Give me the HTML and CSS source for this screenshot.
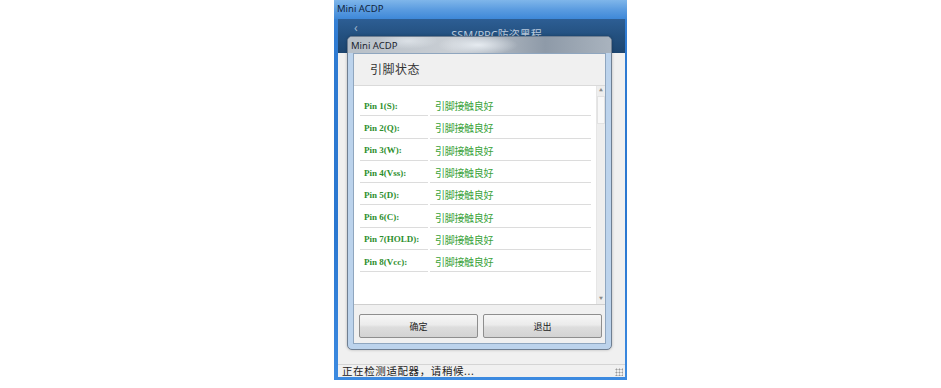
FILE: index.html
```html
<!DOCTYPE html>
<html lang="zh">
<head>
<meta charset="utf-8">
<title>Mini ACDP</title>
<link rel="stylesheet" href="styles.css">
</head>
<body>
<div class="stage">
  <div class="win">
    <div class="win-title">Mini ACDP</div>
    <div class="client">
      <div class="app-header">
        <span class="back">&lsaquo;</span>
        <span class="app-title">SSM/PPC防盗黑程</span>
      </div>
      <div class="app-body"></div>
      <div class="statusbar">
        <span>正在检测适配器，请稍候...</span>
        <span class="grip"></span>
      </div>

      <div class="dialog">
        <div class="dlg-title">Mini ACDP</div>
        <div class="dlg-client">
          <div class="dlg-head">引脚状态</div>
          <div class="listbox">
            <div class="rows">
              <div class="row"><span class="pin">Pin 1(S):</span><span class="state">引脚接触良好</span></div>
              <div class="row"><span class="pin">Pin 2(Q):</span><span class="state">引脚接触良好</span></div>
              <div class="row"><span class="pin">Pin 3(W):</span><span class="state">引脚接触良好</span></div>
              <div class="row"><span class="pin">Pin 4(Vss):</span><span class="state">引脚接触良好</span></div>
              <div class="row"><span class="pin">Pin 5(D):</span><span class="state">引脚接触良好</span></div>
              <div class="row"><span class="pin">Pin 6(C):</span><span class="state">引脚接触良好</span></div>
              <div class="row"><span class="pin">Pin 7(HOLD):</span><span class="state">引脚接触良好</span></div>
              <div class="row"><span class="pin">Pin 8(Vcc):</span><span class="state">引脚接触良好</span></div>
            </div>
            <div class="scrollbar">
              <span class="arrow">&#9650;</span>
              <span class="thumb"></span>
              <span class="track"></span>
              <span class="arrow">&#9660;</span>
            </div>
          </div>
          <div class="dlg-foot">
            <button class="btn">确定</button>
            <button class="btn">退出</button>
          </div>
        </div>
      </div>
    </div>
  </div>
</div>
</body>
</html>
```

FILE: styles.css
```css
* { box-sizing: border-box; }
html, body { margin: 0; padding: 0; background: #ffffff; }
body { width: 941px; height: 388px; overflow: hidden; font-family: "Noto Sans", "Noto Sans CJK SC", sans-serif; }

.stage { padding-left: 334px; }

.win {
  width: 293px;
  height: 380px;
  background: linear-gradient(180deg, #3d87d8 0%, #2f7bd2 10%, #2a77d0 60%, #3c8ae0 100%);
  padding: 0 2px 3px 4px;
  display: flex;
  flex-direction: column;
}
.win-title {
  height: 19px;
  line-height: 17px;
  font-size: 9.5px;
  color: #10243c;
  background: linear-gradient(180deg, #7fb6ea 0%, #5b9ce0 50%, #3e88d8 100%);
  margin: 0 -2px 0 -4px;
  padding-left: 3px;
}
.client {
  position: relative;
  flex: 1;
  display: flex;
  flex-direction: column;
  background: #f0f0f0;
}
.app-header {
  height: 34px;
  background: linear-gradient(180deg, #2d5e94 0%, #23507f 50%, #1d456f 100%);
  display: flex;
  align-items: flex-start;
  justify-content: center;
  position: relative;
  overflow: hidden;
}
.back { position: absolute; left: 16px; top: 3px; font-size: 12px; line-height: 12px; color: #9fb4cc; }
.app-title { font-size: 11px; line-height: 14px; margin-left: 30px; margin-top: 9px; color: #b9c9dc; }
.app-body { flex: 1; background: #f0f0f0; }
.statusbar {
  height: 13px;
  border-top: 1px solid #d4d4d4;
  background: #f0f0f0;
  font-size: 10.5px;
  line-height: 12px;
  color: #222;
  padding-left: 4px;
  display: flex;
  justify-content: space-between;
  letter-spacing: 0.6px;
}
.grip {
  width: 8px; height: 8px; margin: 3px 2px 0 0;
  background: radial-gradient(circle, #9a9a9a 0.8px, transparent 1.2px) 0 0 / 3px 3px;
}

/* modal dialog overlays the app */
.dialog {
  position: absolute;
  left: 9px;
  top: 17px;
  width: 265px;
  height: 314px;
  border-radius: 5px;
  border: 1px solid #6f7f92;
  background: #bcd3ec;
  padding: 0 5px 5px 5px;
  display: flex;
  flex-direction: column;
  box-shadow: 0 0 3px rgba(0,0,0,0.25);
}
.dlg-title {
  height: 16px;
  margin: 0 -5px;
  border-radius: 4px 4px 0 0;
  background:
    radial-gradient(ellipse 40px 10px at 130px 8px, rgba(235,240,245,0.9), transparent),
    radial-gradient(ellipse 30px 8px at 60px 4px, rgba(230,235,240,0.7), transparent),
    linear-gradient(90deg, #b8c0c8 0%, #c9ced4 40%, #8e9aa8 75%, #a9b3be 100%);
  font-size: 9.5px;
  line-height: 17px;
  color: #1c2530;
  padding-left: 3px;
}
.dlg-client {
  flex: 1;
  background: #f0f0f0;
  border: 1px solid #8fa6bf;
  display: flex;
  flex-direction: column;
}
.dlg-head {
  height: 32px;
  padding-left: 16px;
  font-size: 12px;
  line-height: 32px;
  color: #333;
  letter-spacing: 0.5px;
  border-bottom: 1px solid #dadada;
}
.listbox {
  height: 219px;
  background: #fff;
  display: flex;
  border-bottom: 1px solid #cfcfcf;
}
.rows { flex: 1; padding: 8px 5px 0 6px; }
.row {
  height: 22.3px;
  display: flex;
  align-items: center;
  padding-top: 1px;
  background:
    linear-gradient(#dcdcdc, #dcdcdc) left bottom / 68px 1px no-repeat,
    linear-gradient(#dcdcdc, #dcdcdc) 70px bottom / 162px 1px no-repeat;
}
.pin {
  width: 75px;
  padding-left: 4px;
  font-family: "Liberation Serif", serif;
  font-weight: bold;
  font-size: 9px;
  color: #2e8f2e;
}
.state {
  font-size: 10px;
  color: #3aa33a;
  letter-spacing: -0.3px;
}
.scrollbar {
  width: 9px;
  background: #eeeeee;
  border-left: 1px solid #e6e6e6;
  display: flex;
  flex-direction: column;
  align-items: center;
}
.arrow { font-size: 4px; color: #8a8a8a; height: 10px; line-height: 10px; }
.thumb { width: 8px; height: 28px; background: #f8f8f8; border: 1px solid #e2e2e2; }
.track { flex: 1; }

.dlg-foot {
  flex: 1;
  display: flex;
  gap: 5px;
  padding: 9px 3px 0 5px;
  align-items: flex-start;
}
.btn {
  width: 119px;
  height: 24px;
  border: 1px solid #8e8e8e;
  border-radius: 2px;
  background: linear-gradient(180deg, #f6f6f6 0%, #ebebeb 45%, #dddddd 55%, #d3d3d3 100%);
  font-family: "Noto Sans CJK SC", sans-serif;
  font-size: 9px;
  color: #222;
  padding: 0;
}
```
